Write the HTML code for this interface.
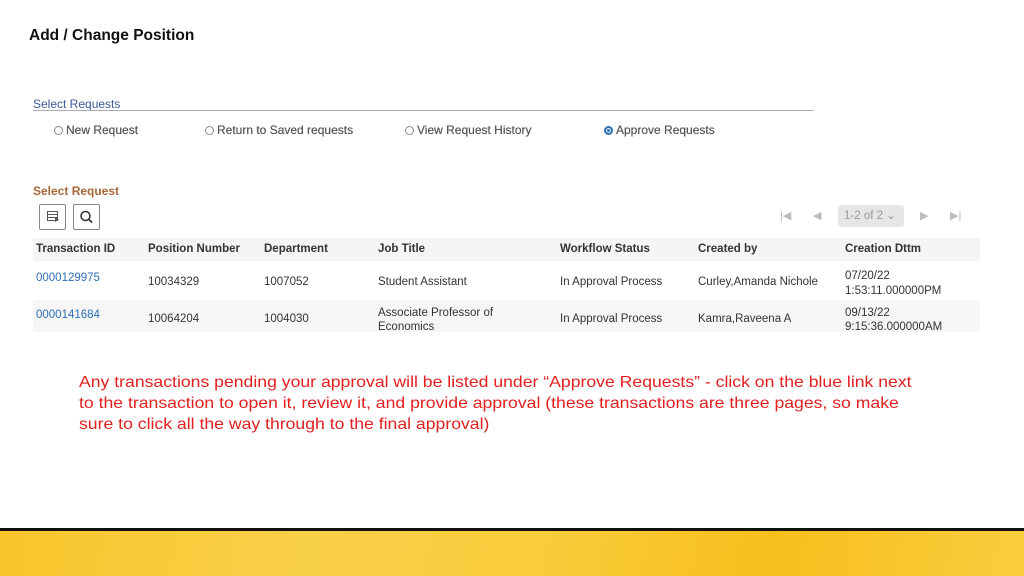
<!DOCTYPE html>
<html><head><style>
body{margin:0;width:1024px;height:576px;position:relative;overflow:hidden;background:#fff;font-family:"Liberation Sans",Arial,sans-serif;}
.a{position:absolute;white-space:nowrap}
.s{font-size:11.5px;color:#333}
.h{font-size:11.5px;font-weight:bold;color:#333}
.r{display:inline-block;width:9px;height:9px;border:1px solid #888;border-radius:50%;vertical-align:-1px;margin-right:3px;box-sizing:border-box}
.lnk{color:#2f6eb5;font-size:11.5px}
.o{font-size:12px;color:#555;text-shadow:0 0 0.4px #555}
</style></head><body>
<div class="a" style="left:29px;top:27px;font-size:15.5px;font-weight:bold;color:#111">Add / Change Position</div>
<div class="a" style="left:33px;top:97px;font-size:12px;color:#3a5a9a">Select Requests</div>
<div class="a" style="left:33px;top:110px;width:781px;height:1px;background:#aab"></div>
<div class="a o" style="left:54px;top:123px"><span class="r"></span>New Request</div>
<div class="a o" style="left:205px;top:123px"><span class="r"></span>Return to Saved requests</div>
<div class="a o" style="left:405px;top:123px"><span class="r"></span>View Request History</div>
<div class="a o" style="left:604px;top:123px"><span class="r" style="border:2px solid #2f6eb5;background:#2f6eb5;box-shadow:inset 0 0 0 1px #fff"></span>Approve Requests</div>
<div class="a" style="left:33px;top:184px;font-size:12px;font-weight:bold;color:#a8683a">Select Request</div>
<div class="a" style="left:39px;top:204px;width:27px;height:26px;border:1px solid #888;border-radius:2px;box-sizing:border-box"><svg width="25" height="24"><g fill="none" stroke="#555" stroke-width="1"><rect x="7.5" y="6.5" width="10" height="9"/><line x1="7.5" y1="9.5" x2="17.5" y2="9.5"/><line x1="7.5" y1="12.5" x2="17.5" y2="12.5"/></g><path d="M15 12l4 2.5-4 2.5z" fill="#555"/></svg></div>
<div class="a" style="left:73px;top:204px;width:27px;height:26px;border:1px solid #888;border-radius:2px;box-sizing:border-box"><svg width="25" height="24"><circle cx="11.5" cy="11" r="4.5" fill="none" stroke="#333" stroke-width="1.5"/><line x1="14.8" y1="14.3" x2="18" y2="17.5" stroke="#333" stroke-width="1.8"/></svg></div>
<div class="a" style="left:780px;top:209px;font-size:11px;color:#bbb">|◀</div>
<div class="a" style="left:813px;top:209px;font-size:11px;color:#bbb">◀</div>
<div class="a" style="left:838px;top:205px;width:66px;height:22px;background:#e6e6e6;border-radius:3px;font-size:11.5px;color:#999;line-height:22px;padding-left:6px;box-sizing:border-box">1-2 of 2 ⌄</div>
<div class="a" style="left:920px;top:209px;font-size:11px;color:#bbb">▶</div>
<div class="a" style="left:950px;top:209px;font-size:11px;color:#bbb">▶|</div>
<div class="a" style="left:33px;top:238px;width:947px;height:23px;background:#f5f5f5"></div>
<div class="a" style="left:33px;top:300px;width:947px;height:32px;background:#f6f6f6"></div>
<div class="a h" style="left:36px;top:243px">Transaction ID</div>
<div class="a h" style="left:148px;top:243px">Position Number</div>
<div class="a h" style="left:264px;top:243px">Department</div>
<div class="a h" style="left:378px;top:243px">Job Title</div>
<div class="a h" style="left:560px;top:243px">Workflow Status</div>
<div class="a h" style="left:698px;top:243px">Created by</div>
<div class="a h" style="left:845px;top:243px">Creation Dttm</div>
<div class="a lnk" style="left:36px;top:272px">0000129975</div>
<div class="a s" style="left:148px;top:276px">10034329</div>
<div class="a s" style="left:264px;top:276px">1007052</div>
<div class="a s" style="left:378px;top:276px">Student Assistant</div>
<div class="a s" style="left:560px;top:276px">In Approval Process</div>
<div class="a s" style="left:698px;top:276px">Curley,Amanda Nichole</div>
<div class="a s" style="left:845px;top:269px;line-height:15px">07/20/22<br>1:53:11.000000PM</div>
<div class="a lnk" style="left:36px;top:309px">0000141684</div>
<div class="a s" style="left:148px;top:313px">10064204</div>
<div class="a s" style="left:264px;top:313px">1004030</div>
<div class="a s" style="left:378px;top:306px;line-height:14px">Associate Professor of<br>Economics</div>
<div class="a s" style="left:560px;top:313px">In Approval Process</div>
<div class="a s" style="left:698px;top:313px">Kamra,Raveena A</div>
<div class="a s" style="left:845px;top:306px;line-height:14px">09/13/22<br>9:15:36.000000AM</div>
<div class="a" style="left:79px;top:372px;font-size:15.6px;color:#e32020;line-height:21px;transform:scaleX(1.13);transform-origin:0 0">Any transactions pending your approval will be listed under “Approve Requests” - click on the blue link next<br>to the transaction to open it, review it, and provide approval (these transactions are three pages, so make<br>sure to click all the way through to the final approval)</div>
<div class="a" style="left:0;top:528px;width:1024px;height:3px;background:#111"></div>
<div class="a" style="left:0;top:531px;width:1024px;height:45px;background:linear-gradient(100deg,#f8c52a 0%,#f9d04a 30%,#f8cb38 55%,#f7bf1c 75%,#f9cd3e 100%)"></div>
</body></html>
